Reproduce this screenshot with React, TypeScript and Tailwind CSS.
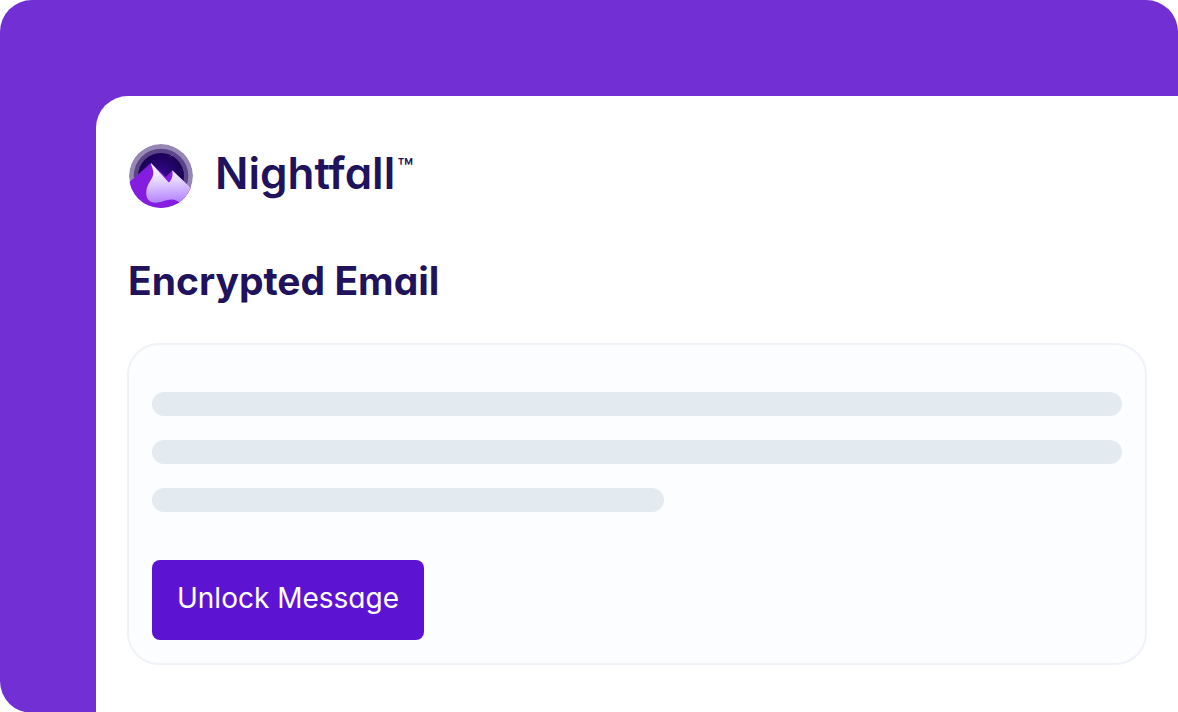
function NightfallMark() {
  return (
    <svg viewBox="0 0 64 64" className="size-16 shrink-0" aria-hidden="true">
      <defs>
        <radialGradient id="sky" cx="32" cy="30" r="24" gradientUnits="userSpaceOnUse">
          <stop offset="0" stopColor="#33078a" />
          <stop offset="1" stopColor="#18004f" />
        </radialGradient>
        <linearGradient id="snow" x1="34" y1="20" x2="36" y2="60" gradientUnits="userSpaceOnUse">
          <stop offset="0" stopColor="#ffffff" />
          <stop offset="0.4" stopColor="#e6d8ff" />
          <stop offset="1" stopColor="#b07cff" />
        </linearGradient>
        <clipPath id="disc">
          <circle cx="32" cy="32" r="32" />
        </clipPath>
      </defs>
      <g clipPath="url(#disc)">
        <circle cx="32" cy="32" r="32" fill="#9787b4" />
        <circle cx="32" cy="32" r="27.3" fill="#5b4588" />
        <circle cx="32" cy="32" r="23" fill="url(#sky)" />
        <path d="M41 13 46 8" stroke="#7560b0" strokeWidth=".6" />
        <path d="M0 38.5 22 19 37 33 43.2 26.2 64 46V64H0Z" fill="#841de0" />
        <path
          d="M22 19 39.8 38.6C43 35.5 44.2 31.5 43.2 26.2L64 46V54L56 60C50 60 49 55.5 43 55.5 36 55.5 31 59.5 24 58.5 19.5 57.5 17 54 17.3 48.5 17.8 37 26.5 35 23.8 25.5 23.3 23 22 21.5 22 19Z"
          fill="url(#snow)"
        />
      </g>
    </svg>
  );
}

export default function App() {
  return (
    <div className="min-h-screen bg-white font-['Inter','Liberation_Sans',sans-serif] text-[#20135b] [font-feature-settings:'cv11']">
      <div className="flex min-h-screen rounded-[32px] rounded-br-none bg-[#712fd4] pt-24 pl-24">
        <main className="flex-1 rounded-tl-[32px] bg-white px-[31px] py-12">
          <header className="flex h-16 items-center gap-[22px] pl-0.5">
            <NightfallMark />
            <div className="flex items-start gap-0.5 pb-1.5">
              <span className="text-[44px] leading-[52px] font-semibold">Nightfall</span>
              <span className="text-[26px] leading-[42px] font-medium">™</span>
            </div>
          </header>
          <h1 className="mt-12 pl-px text-[39px] leading-[50px] font-bold">Encrypted Email</h1>
          <section
            aria-label="Encrypted message"
            className="mt-[37px] rounded-[32px] border-2 border-[#f1f2f7] bg-[#fcfdff] px-[23px] pt-[47px] pb-[23px]"
          >
            <div className="flex flex-col gap-6" aria-hidden="true">
              <div className="h-6 rounded-full bg-[#e3eaf0]" />
              <div className="h-6 rounded-full bg-[#e3eaf0]" />
              <div className="h-6 w-[512px] max-w-full rounded-full bg-[#e3eaf0]" />
            </div>
            <button
              type="button"
              className="mt-12 flex h-20 w-[272px] items-center justify-center rounded-lg bg-[#5d14d2] pb-1 text-[28px] leading-9 text-white"
            >
              Unlock Message
            </button>
          </section>
        </main>
      </div>
    </div>
  );
}
